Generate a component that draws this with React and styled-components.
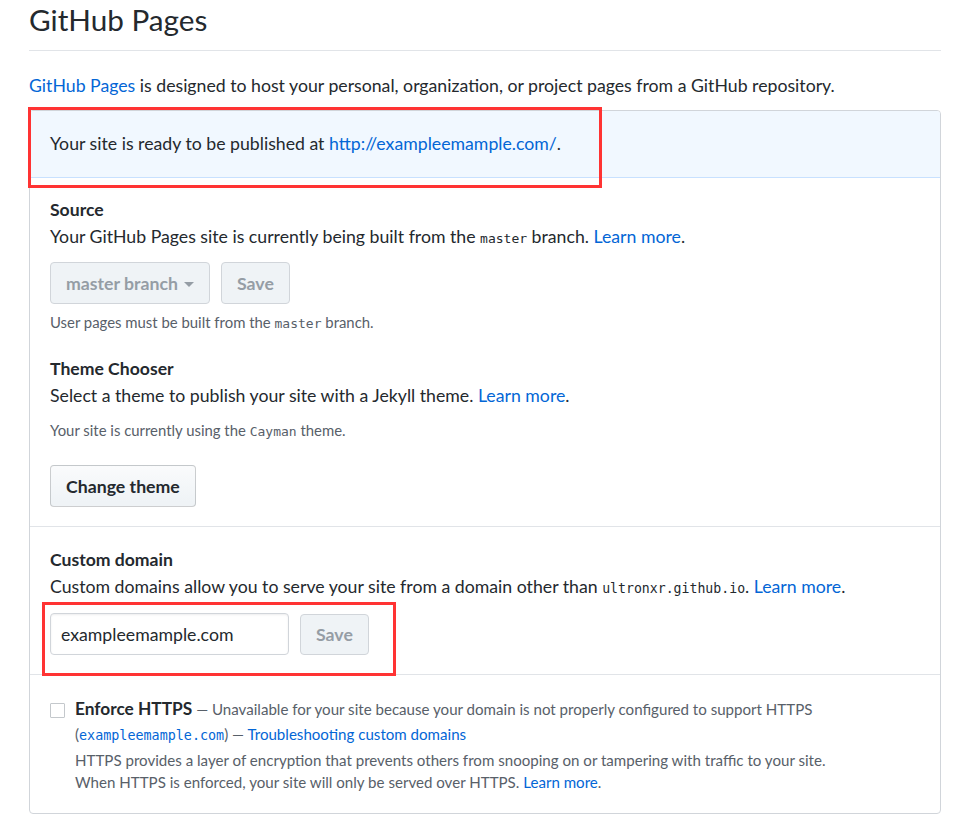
import React from "react";
import styled, { createGlobalStyle } from "styled-components";

const Global = createGlobalStyle`
  body {
    margin: 0;
    background: #fff;
    font-family: Lato, "Noto Sans", sans-serif;
    color: #24292e;
    font-size: 17.7px;
  }
`;

const Page = styled.div`
  position: relative;
  width: 912px;
  padding: 0 15px 0 29px;
`;

const Title = styled.h2`
  margin: 0;
  padding: 2px 0 12px;
  font-size: 29.7px;
  font-weight: 400;
  line-height: 36px;
  border-bottom: 1px solid #e1e4e8;
`;

const Lead = styled.p`
  margin: 22px 0 11px;
  line-height: 26px;
`;

const Link = styled.a`
  color: #0366d6;
  text-decoration: none;
`;

const Box = styled.div`
  border: 1px solid #d1d5da;
  border-radius: 4px;
  overflow: hidden;
`;

const Flash = styled.div`
  background: #f1f8ff;
  border-bottom: 1px solid #c8e1ff;
  padding: 20px 20px 21px;
  line-height: 25px;
`;

const Section = styled.div`
  padding: ${(p) => p.pad || "20px"};
  border-top: ${(p) => (p.first ? "none" : "1px solid #e1e4e8")};
`;

const Heading = styled.h4`
  margin: ${(p) => p.mt || "0"} 0 0;
  font-size: 17.6px;
  font-weight: 700;
  line-height: 26px;
`;

const Desc = styled.p`
  margin: 0;
  line-height: 28px;
`;

const Note = styled.p`
  margin: ${(p) => p.m || "0"};
  font-size: 14.9px;
  color: #586069;
  line-height: 20px;
`;

const Code = styled.code`
  font-family: "DejaVu Sans Mono", "Liberation Mono", monospace;
  font-size: ${(p) => p.size || "13.2px"};
  color: ${(p) => p.color || "inherit"};
`;

const Row = styled.div`
  display: flex;
  align-items: center;
  gap: 11px;
  margin-top: ${(p) => p.mt || "10px"};
`;

const Button = styled.button`
  height: ${(p) => p.h || "42px"};
  padding: 0 15px;
  font-family: inherit;
  font-size: 17.7px;
  font-weight: 700;
  color: ${(p) => (p.disabled ? "#959da5" : "#24292e")};
  background: ${(p) => (p.disabled ? "#eff3f6" : "linear-gradient(#fafbfc, #eff3f6 90%)")};
  border: 1px solid ${(p) => (p.disabled ? "#d1d5da" : "rgba(27,31,35,0.2)")};
  border-radius: 4px;
  display: inline-flex;
  align-items: center;
  gap: 6px;
  cursor: ${(p) => (p.disabled ? "default" : "pointer")};
`;

const Caret = styled.span`
  width: 0;
  height: 0;
  border-left: 5px solid transparent;
  border-right: 5px solid transparent;
  border-top: 5px solid #959da5;
  margin-top: 2px;
`;

const Input = styled.input`
  width: 239px;
  height: 42px;
  box-sizing: border-box;
  padding: 0 10px;
  font-family: inherit;
  font-size: 17.7px;
  color: #24292e;
  border: 1px solid #d1d5da;
  border-radius: 4px;
  box-shadow: inset 0 1px 2px rgba(27,31,35,0.075);
`;

const CheckRow = styled.div`
  display: flex;
  gap: 10px;
`;

const Check = styled.span`
  flex: none;
  width: 13px;
  height: 13px;
  margin-top: 6px;
  border: 1px solid #c4c8cc;
  border-radius: 1px;
  background: #fff;
`;

const Strong = styled.span`
  font-size: 17.3px;
  font-weight: 700;
  color: #24292e;
`;

const Small = styled.div`
  font-size: 15.1px;
  color: #586069;
  line-height: ${(p) => p.lh || "22px"};
`;

const Annotation = styled.div`
  position: absolute;
  border: 3px solid #ff3333;
  pointer-events: none;
`;

export default function App() {
  return (
    <>
      <Global />
      <Page>
        <Title>GitHub Pages</Title>
        <Lead>
          <Link href="#">GitHub Pages</Link> is designed to host your personal,
          organization, or project pages from a GitHub repository.
        </Lead>
        <Box>
          <Flash>
            Your site is ready to be published at{" "}
            <Link href="#">http://exampleemample.com/</Link>.
          </Flash>
          <Section first pad="19px 20px 19px">
            <Heading>Source</Heading>
            <Desc>
              Your GitHub Pages site is currently being built from the{" "}
              <Code size="13px">master</Code> branch. <Link href="#">Learn more</Link>.
            </Desc>
            <Row mt="9px">
              <Button disabled>
                master branch <Caret />
              </Button>
              <Button disabled>Save</Button>
            </Row>
            <Note m="8px 0 0">
              User pages must be built from the <Code size="13px">master</Code> branch.
            </Note>
            <Heading mt="22px">Theme Chooser</Heading>
            <Desc>
              Select a theme to publish your site with a Jekyll theme.{" "}
              <Link href="#">Learn more</Link>.
            </Desc>
            <Note m="10px 0 0">
              Your site is currently using the <Code size="13px">Cayman</Code> theme.
            </Note>
            <Row mt="23px">
              <Button>Change theme</Button>
            </Row>
          </Section>
          <Section pad="20px 20px 19px">
            <Heading>Custom domain</Heading>
            <Desc>
              Custom domains allow you to serve your site from a domain other than{" "}
              <Code>ultronxr.github.io</Code>. <Link href="#">Learn more</Link>.
            </Desc>
            <Row mt="10px">
              <Input defaultValue="exampleemample.com" />
              <Button disabled h="41px">Save</Button>
            </Row>
          </Section>
          <Section pad="22px 20px 20px">
            <CheckRow>
              <Check />
              <div>
                <Small lh="24px">
                  <Strong>Enforce HTTPS</Strong> — Unavailable for your site because
                  your domain is not properly configured to support HTTPS
                </Small>
                <Small lh="26px">
                  (<Code size="13.4px" color="#0366d6">exampleemample.com</Code>) —{" "}
                  <Link href="#">Troubleshooting custom domains</Link>
                </Small>
                <Small>
                  HTTPS provides a layer of encryption that prevents others from
                  snooping on or tampering with traffic to your site.
                  <br />
                  When HTTPS is enforced, your site will only be served over HTTPS.{" "}
                  <Link href="#">Learn more</Link>.
                </Small>
              </div>
            </CheckRow>
          </Section>
        </Box>
        <Annotation style={{ left: 28, top: 107, width: 568, height: 75 }} />
        <Annotation style={{ left: 42, top: 602, width: 348, height: 68 }} />
      </Page>
    </>
  );
}
